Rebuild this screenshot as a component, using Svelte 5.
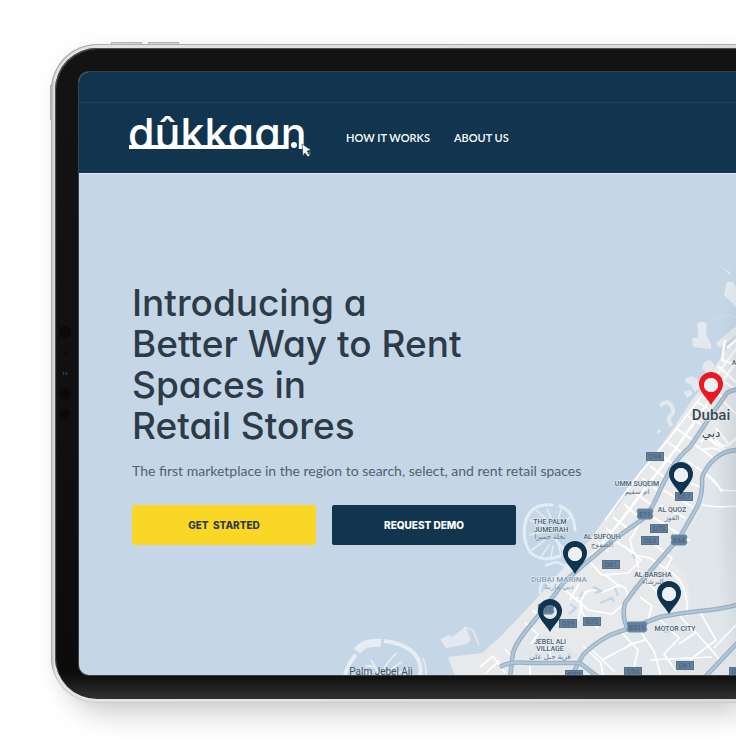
<script>
  const links = ['HOW IT WORKS', 'ABOUT US'];
  const headline = ['Introducing a', 'Better Way to Rent', 'Spaces in', 'Retail Stores'];

  const pins = [
    { x: 711, y: 405, color: '#ec1722' },
    { x: 681, y: 495, color: '#0f3450' },
    { x: 575, y: 574, color: '#0f3450' },
    { x: 669, y: 614, color: '#0f3450' },
    { x: 550, y: 632, color: '#0f3450' }
  ];

  const signs = [
    { x: 655, y: 457, t: 'D94' },
    { x: 684, y: 497, t: 'D67' },
    { x: 659, y: 529, t: 'D73' },
    { x: 650, y: 541, t: 'D63' },
    { x: 611, y: 565, t: 'D61' },
    { x: 568, y: 624, t: 'D59' },
    { x: 592, y: 622, t: 'D72' },
    { x: 685, y: 666, t: 'D61' },
    { x: 633, y: 672, t: 'D54' },
    { x: 574, y: 675, t: 'D57' },
    { x: 738, y: 672, t: 'D62' }
  ];

  const shields = [
    { x: 645, y: 514, t: 'E11' },
    { x: 679, y: 540, t: 'E44' },
    { x: 637, y: 627, t: 'E311' },
    { x: 546, y: 609, t: 'E11' }
  ];

  const places = [
    { x: 637, y: 486, t: 'UMM SUQEIM' },
    { x: 672, y: 512, t: 'AL QUOZ' },
    { x: 550, y: 524, t: 'THE PALM' },
    { x: 551, y: 532, t: 'JUMEIRAH' },
    { x: 602, y: 539, t: 'AL SUFOUH' },
    { x: 653, y: 577, t: 'AL BARSHA' },
    { x: 675, y: 631, t: 'MOTOR CITY' },
    { x: 550, y: 644, t: 'JEBEL ALI' },
    { x: 550, y: 651, t: 'VILLAGE' }
  ];

  const arabic = [
    { x: 637, y: 494, t: 'ام سقيم' },
    { x: 672, y: 520, t: 'القوز' },
    { x: 550, y: 539, t: 'نخلة جميرا' },
    { x: 602, y: 547, t: 'الصفوح' },
    { x: 653, y: 584, t: 'البرشاء' },
    { x: 550, y: 659, t: 'قرية جبل علي' }
  ];

  const highways = [
    'M510 677L513 653Q515 645 525 632L547 605L563 583L580 568L613 540L643 519Q652 510 660 490L670 470Q680 455 690 447L710 417L727 393Q731 390 740 389',
    'M571 677L583 655Q592 645 610 635Q632 627 660 617Q680 613 700 611Q724 609 740 604',
    'M629 631Q621 618 625 603Q634 590 645 577L680 537L697 507Q703 495 702 478Q705 467 717 457Q726 450 740 450',
    'M500 667Q510 661 530 663H580L598 677',
    'M705 677L740 640'
  ];
</script>

<div class="stage">
  <div class="device">
    <span class="key top one"></span>
    <span class="key top two"></span>
    <span class="key side"></span>
    <div class="bezel">
      <svg class="sensors" width="20" height="100" viewBox="0 0 20 100" aria-hidden="true">
        <circle cx="10" cy="10" r="6" fill="#0a0a0a" />
        <circle cx="10" cy="31" r="1.5" fill="#0a0a0a" />
        <circle cx="10" cy="52" r="3" fill="#0c1220" />
        <path d="M8.5 50v3M11.5 50v3" stroke="#1c3f70" stroke-width="1.4" />
        <circle cx="10" cy="72" r="6" fill="#0a0a0a" />
        <circle cx="10" cy="93" r="5" fill="#0a0a0a" />
      </svg>
      <div class="screen">
        <header>
          <div class="strip"></div>
          <div class="bar">
            <a class="logo" href="#home" aria-label="dûkkaan">
              <svg width="186" height="60" viewBox="0 0 186 60">
                <text x="-1" y="41">dûkkaan</text>
                <path d="M0 39H155" fill="none" stroke="#fff" stroke-width="4" />
                <circle cx="165" cy="37" r="3" fill="#fff" />
                <path d="M173 36l9 6-4 1 3 4-2 2-3-4-2 3z" fill="#fff" stroke="#12354f" stroke-width="0.6" />
                <path d="M181 43l1 4-4-1z" fill="#6e6259" />
              </svg>
            </a>
            <nav>
              {#each links as link}
                <a href="#{link.toLowerCase().replaceAll(' ', '-')}">{link}</a>
              {/each}
            </nav>
          </div>
        </header>

        <main>
          <svg class="map" width="400" height="501" viewBox="336 174 400 501" role="img" aria-label="Map of Dubai">
            <defs>
              <linearGradient id="inland" x1="0" x2="1">
                <stop offset="0" stop-color="#e3e8ec" />
                <stop offset="1" stop-color="#dfe5e9" />
              </linearGradient>
              <radialGradient id="edge">
                <stop offset="0" stop-color="#5f7688" stop-opacity="0.24" />
                <stop offset="1" stop-color="#5f7688" stop-opacity="0" />
              </radialGradient>
            </defs>

            <path fill="#e8e9eb" d="M455 676L448 657L482 653L500 637L525 611L547 587L556 577L567 563L590 540L603 521L617 507L625 496L633 480L646 466L660 447L675 426L686 409L697 393L704 378L713 370L724 353L736 337V676Z" />
            <path fill="url(#inland)" d="M736 454Q722 453 712 465Q703 480 704 502L695 522L664 560L682 570Q691 582 690 610L650 622L608 638L586 655L578 676H736Z" />
            <path fill="url(#inland)" d="M516 650L532 630L560 640L578 656L560 661H516ZM514 666H575L568 676H512Z" />
            <path fill="#e3e9ee" d="M440 639L449 635L452 637L465 627L468 632L471 640L467 644L446 648ZM698 328L697 325Q698 321 703 322L707 324L706 334L711 344V349L693 347L692 338H698ZM727 282L733 282L741 295V312L734 305L724 295ZM722 267L731 273L729 274ZM716 343L741 322V331L722 347L717 346ZM704 362L710 360L715 365L710 375L702 369ZM685 379L691 376L696 378L700 385L696 394L691 385L685 382ZM684 392L690 390L693 394L687 398ZM657 431l3-2 1 3-4 2Z" />
            <path d="M660 406Q668 398 672 407Q675 412 670 416Q667 420 672 426" fill="none" stroke="#e3e9ee" stroke-width="4" />
            <path d="M464 627L473 630L479 645" fill="none" stroke="#e3e9ee" stroke-width="1.5" />
            <path d="M712 322Q724 310 738 318" fill="none" stroke="#d2e0eb" />

            <g fill="none" stroke="#e7edf2">
              <path d="M345 676Q348 663 356 655M384 641Q410 644 418 659Q422 667 420 676" stroke-width="4" />
              <path d="M357 651Q364 641 381 643" stroke-width="8" />
              <path d="M423 658Q427 667 426 676M380 675L371 660M382 672Q390 658 397 653M387 674Q395 665 402 662M390 677Q405 670 410 668M365 666Q378 665 380 675M358 670Q368 672 374 678" stroke-width="1.6" />
            </g>
            <g fill="none" stroke="#e5edf4" stroke-linecap="round">
              <path d="M552 505Q532 503 526 520Q521 538 530 552Q541 563 560 556M560 506Q572 511 574 523L575 530" stroke-width="3" />
              <path d="M556 539L566 555M549 545L541 557M545 540L532 550M542 532L530 535M544 526L530 520M547 520L536 510M552 520L547 509M558 520L561 509M562 526L570 517M553 546L551 557M558 543L561 555" stroke-width="1.6" />
              <path d="M555 539L571 558M546 565L557 562L569 568M540 593Q539 585 545 580L551 590M550 579Q562 574 568 580" stroke-width="2.4" />
            </g>

            <g fill="none" stroke="#fff" stroke-width="1.7">
              <path d="M480 667L493 656L505 673M486 673L500 660M505 649L517 663M525 623L538 634L531 644M533 610L548 625L569 623M565 590L582 604L578 621M580 582L570 600" />
              <path d="M556 590L588 560L620 522L650 482L675 450L736 362" stroke-width="2.4" />
              <path d="M605 520L640 473L668 440L700 398L736 349" />
              <path d="M596 540L608 552M606 528L620 540M613 517L631 531M624 504L642 520M632 491L652 505M642 478L660 492M650 466L667 479M659 453L675 466M668 442L684 454M677 429L694 441M688 416L704 427M697 402L714 412M706 387L724 398M714 374L736 390" />
              <path d="M576 599Q588 586 603 592L620 585Q632 590 625 603L612 614L588 610ZM587 592Q576 603 584 616L598 628M604 574L620 587M613 540L635 553L640 575L655 590M588 560L602 575L628 573L641 560L626 548M640 523L630 540L634 555L650 558L667 570Q685 578 687 604V616M650 515L665 525L690 541M663 490L698 510M660 505L685 518M672 475L702 488M685 460L704 472M693 443L716 460M715 412L700 432L720 448L736 440M722 400L736 414M702 505Q716 508 736 506M708 476L722 490L736 491M655 545L672 558L665 570" />
              <path d="M583 646L601 663L603 676M592 650L615 672M622 633L638 650L632 676M638 628L654 651L661 676M628 645L645 640M660 620L679 638L664 654L676 671M680 616L695 633L679 644M694 630L720 660M700 612L716 640L690 660M650 660L712 657M736 625L714 648M602 660L636 642M530 665V676M552 663L549 648M640 597L652 606L648 620M655 590L664 600" />
              <path d="M700 442Q710 433 718 442T736 438M702 450Q716 445 724 454M709 438L725 450M716 428L730 446M702 472Q714 478 722 492" stroke-width="2" />
              <path d="M725 340L722 360L736 365M727 348L736 340M718 366L736 382" stroke-width="2.4" />
            </g>
            <path d="M570 604L576 608L569 614M593 587l8 4-6 2M600 603l12-5 2 4M615 588l3 8M579 597l4-5M633 554l2 5M664 632h5M699 390l-9 8" fill="none" stroke="#bcd5e8" stroke-width="2" />

            {#each highways as d}
              <path {d} fill="none" stroke="#93adc3" stroke-width="4.6" />
              <path {d} fill="none" stroke="#b0c5d6" stroke-width="2.6" />
            {/each}

            {#each signs as s}
              <g class="sign">
                <rect x={s.x - 8.5} y={s.y - 4.5} width="17" height="8" />
                <text x={s.x} y={s.y + 2}>{s.t}</text>
              </g>
            {/each}
            {#each shields as s}
              <g class="shield">
                {#if s.t.length > 3}
                  <path d="M{s.x - 9} {s.y - 5}h18l1 2-1 3 1 3-2 2h-16l-2-2 1-3-1-3z" />
                {:else}
                  <path d="M{s.x - 7} {s.y - 5}h14l1 2-1 3 1 3-2 2h-12l-2-2 1-3-1-3z" />
                {/if}
                <text x={s.x} y={s.y + 3}>{s.t}</text>
              </g>
            {/each}

            <ellipse cx="748" cy="470" rx="34" ry="230" fill="url(#edge)" />

            {#each pins as p}
              <g transform="translate({p.x} {p.y})">
                <path fill={p.color} fill-rule="evenodd" d="M0 0C-3-6-12-13-12-21A12 12 0 0 1 12-21C12-13 3-6 0 0ZM0-27A7 7 0 1 0 0-13A7 7 0 1 0 0-27Z" />
                {#if p.y !== 632}<circle cy="-20" r="7" fill="#edf1f4" />{/if}
              </g>
            {/each}

            {#each places as p}
              <text class="place" x={p.x} y={p.y}>{p.t}</text>
            {/each}
            {#each arabic as p}
              <text class="arabic" x={p.x} y={p.y}>{p.t}</text>
            {/each}
            <text class="place marina" x="559" y="582">DUBAI MARINA</text>
            <text class="arabic marina" x="559" y="589">دبي مارينا</text>
            <text class="city" x="711" y="420">Dubai</text>
            <text class="city local" x="711" y="437">دبي</text>
            <text class="palm" x="381" y="675">Palm Jebel Ali</text>
            <text class="place" x="736" y="365">AL</text>
          </svg>

          <div class="copy">
            <h1>
              {#each headline as line}
                <span>{line}</span>
              {/each}
            </h1>
            <p>The first marketplace in the region to search, select, and rent retail spaces</p>
            <div class="actions">
              <button class="start" type="button">GET&nbsp; STARTED</button>
              <button class="demo" type="button">REQUEST DEMO</button>
            </div>
          </div>
        </main>
      </div>
    </div>
  </div>
</div>

<style>
  :global(body) {
    background: #fff;
  }
  .stage {
    box-sizing: border-box;
    min-height: 100vh;
    padding: 44px 0 47px 51px;
    overflow: hidden;
  }
  .device {
    position: relative;
    padding: 4px 0 4px 4px;
    border-radius: 46px 0 0 46px;
    background: linear-gradient(90deg, #b5b5b7, #e4e4e5 4px, #d9d9da);
    box-shadow:
      inset 1px 1px 0 #aeaeb0,
      inset 0 -1px 0 #c9c9ca,
      0 0 24px rgba(0, 0, 0, 0.04),
      12px 16px 28px -4px rgba(0, 0, 0, 0.18);
  }
  .key {
    position: absolute;
    box-sizing: border-box;
    border: 1px solid #b0b0b2;
    background: #d5d5d6;
  }
  .key.top {
    top: -2px;
    width: 31px;
    height: 3px;
  }
  .key.one {
    left: 60px;
  }
  .key.two {
    left: 97px;
  }
  .key.side {
    top: 41px;
    left: -1px;
    width: 2px;
    height: 35px;
  }
  .bezel {
    position: relative;
    padding: 24px 0 24px 24px;
    border-radius: 42px 0 0 42px;
    background: linear-gradient(#131313, #101010 60%, #0b0b0b 96%, #303030);
    box-shadow: inset 1px 1px 1px #555;
  }
  .sensors {
    position: absolute;
    left: 0;
    top: 274px;
  }
  .screen {
    border-radius: 10px 0 0 10px;
    background: #c5d7e6;
    overflow: hidden;
    box-shadow: 0 0 0 1px #3c4043;
  }
  header {
    background: #12354f;
    border-bottom: 1px solid #e3ebf1;
  }
  .strip {
    height: 30px;
    border-bottom: 1px solid #20445e;
  }
  .bar {
    display: flex;
    align-items: center;
    gap: 31px;
    height: 70px;
    padding-left: 50px;
  }
  .logo {
    display: block;
    height: 60px;
  }
  .logo svg {
    overflow: visible;
  }
  .logo text {
    font: 500 43px Inter, sans-serif;
    font-feature-settings: 'cv11';
    fill: #fff;
  }
  nav {
    display: flex;
    gap: 24px;
  }
  nav a {
    font: 600 11px/16px Lato, sans-serif;
    color: #fff;
    text-decoration: none;
    white-space: nowrap;
  }
  main {
    position: relative;
    padding: 108px 53px 130px;
  }
  .map {
    position: absolute;
    right: 0;
    bottom: 0;
  }
  .copy {
    position: relative;
    width: max-content;
  }
  h1 {
    margin: 0;
    font: 500 37px/41px Inter, sans-serif;
    font-feature-settings: 'cv11';
    color: #2d3b48;
  }
  h1 span {
    display: block;
  }
  p {
    margin: 15px 0 24px;
    font: 400 14px/20px Lato, sans-serif;
    color: #52616f;
  }
  .actions {
    display: flex;
    gap: 16px;
  }
  button {
    width: 184px;
    height: 40px;
    padding: 0;
    border: 0;
    border-radius: 2px;
    font: 800 10px/16px Inter, sans-serif;
    cursor: pointer;
  }
  .start {
    background: #fad725;
    color: #2d3b48;
  }
  .demo {
    background: #12354f;
    color: #fff;
  }
  .map text {
    text-anchor: middle;
    font-family: Roboto, 'DejaVu Sans', sans-serif;
  }
  .sign rect,
  .shield path {
    fill: #64809a;
    stroke: #56728b;
  }
  .shield path {
    stroke: #6c8cab;
  }
  .map .sign text,
  .map .shield text {
    font-size: 7px;
    fill: #3f5f7d;
  }
  .map .place {
    font-size: 7px;
    font-weight: 500;
    fill: #4a5e70;
    stroke: #edf1f4;
    stroke-width: 1px;
    paint-order: stroke;
  }
  .map .arabic {
    font-family: 'DejaVu Sans', sans-serif;
    font-size: 7px;
    fill: #65798a;
  }
  .map .marina {
    fill: #7f9db8;
  }
  .map .place.marina {
    font-size: 8px;
  }
  .map .city {
    font-size: 15px;
    font-weight: 500;
    fill: #3b4856;
    stroke: #edf1f4;
    stroke-width: 1px;
    paint-order: stroke;
  }
  .map .local {
    font-family: 'DejaVu Sans', sans-serif;
    font-size: 12px;
    font-weight: 400;
  }
  .map .palm {
    font-size: 10px;
    fill: #45525f;
  }
</style>
